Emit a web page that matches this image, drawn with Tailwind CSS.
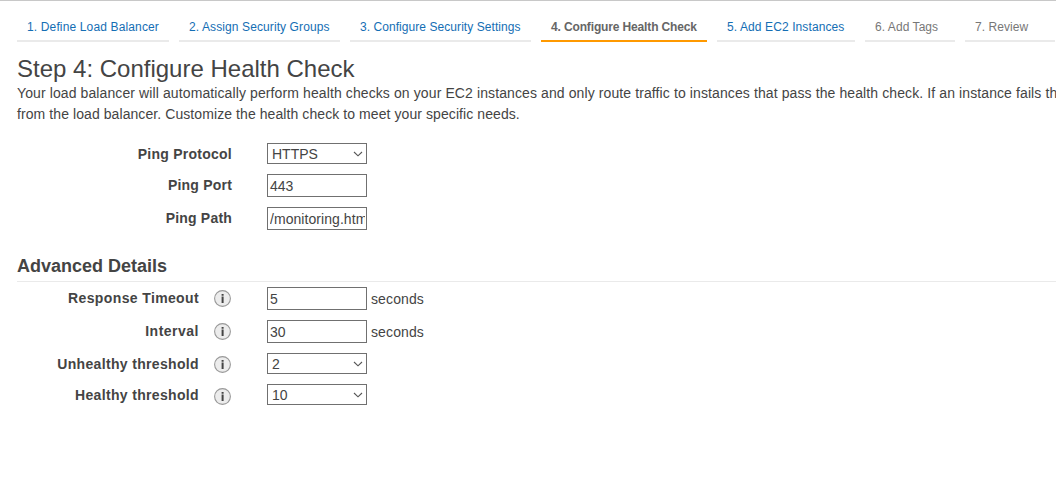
<!DOCTYPE html>
<html lang="en">
<head>
<meta charset="utf-8">
<title>Configure Health Check</title>
<script src="https://cdn.jsdelivr.net/npm/@tailwindcss/browser@4"></script>
</head>
<body class="h-[479px] overflow-hidden border-t border-[#c8c8c8] bg-white pl-[17px] font-['Liberation_Sans',Arial,sans-serif] text-sm text-[#444]">
<svg class="hidden">
  <symbol id="info" viewBox="0 0 17 17">
    <circle cx="8.5" cy="8.5" r="7.9" fill="#ececec" stroke="#999" stroke-width="1.1"/>
    <path d="M7.6 4h2v1.7h-2zM7.6 6.6h2V13h-2z" fill="#444"/>
  </symbol>
  <symbol id="chev" viewBox="0 0 10 6">
    <path d="M1 1L5 4.8 9 1" fill="none" stroke="#555" stroke-width="1.1"/>
  </symbol>
</svg>

<nav class="flex w-[1039px] gap-[10px] pt-[16px] text-[12px] leading-[20px] whitespace-nowrap text-[#146eb4] *:h-[25px] *:shrink-0 *:border-b-2 *:pl-[10px]">
  <a class="w-[152px] border-[#eaeaea] tracking-[0.14px]">1. Define Load Balancer</a>
  <a class="w-[161px] border-[#eaeaea] tracking-[0.1px]">2. Assign Security Groups</a>
  <a class="w-[181px] border-[#eaeaea] tracking-[0.06px]">3. Configure Security Settings</a>
  <a class="w-[166px] border-[#ff9900] font-bold tracking-[-0.14px] text-[#666]">4. Configure Health Check</a>
  <a class="w-[138px] border-[#eaeaea] tracking-[0.1px]">5. Add EC2 Instances</a>
  <a class="w-[90px] border-[#eaeaea] tracking-[0.06px] text-[#777]">6. Add Tags</a>
  <a class="w-[90px] border-[#eaeaea] tracking-[0.06px] text-[#777]">7. Review</a>
</nav>

<h1 class="mt-[12px] h-[29px] text-[24px] leading-[29px] whitespace-nowrap">Step 4: Configure Health Check</h1>
<p class="leading-[21px] whitespace-nowrap"><span class="tracking-[0.105px]">Your load balancer will automatically perform health checks on your EC2 instances and only route traffic to instances that pass the health check. If an instance fails th</span><br><span class="tracking-[0.08px]">from the load balancer. Customize the health check to meet your specific needs.</span></p>

<section class="mt-[18px] flex flex-col gap-[10px]">
  <div class="flex h-[21px] items-start">
    <label class="mt-px w-[215px] text-right font-bold tracking-[0.25px]">Ping Protocol</label>
    <div class="ml-[35px] flex h-[21px] w-[100px] items-center justify-between border border-[#707070] pr-[3px] pl-1"><span>HTTPS</span><svg class="h-[6px] w-[10px]"><use href="#chev"/></svg></div>
  </div>
  <div class="flex h-[23px] items-start">
    <label class="mt-px w-[215px] text-right font-bold tracking-[0.2px]">Ping Port</label>
    <div class="ml-[35px] flex h-[23px] w-[100px] items-center border border-[#707070] px-[2px]">443</div>
  </div>
  <div class="flex h-[23px] items-start">
    <label class="mt-px w-[215px] text-right font-bold tracking-[0.2px]">Ping Path</label>
    <div class="ml-[35px] flex h-[23px] w-[100px] items-center border border-[#707070] pr-px pl-[2px]"><span class="overflow-hidden tracking-[0.06px] whitespace-nowrap">/monitoring.htm</span></div>
  </div>
</section>

<h2 class="mt-[24px] h-[28px] border-b border-[#eaeaea] text-[18px] leading-[24px] font-bold">Advanced Details</h2>

<section class="mt-[5px] flex flex-col gap-[10px]">
  <div class="flex h-[23px] items-start">
    <label class="mt-px w-[182px] text-right font-bold tracking-[0.37px]">Response Timeout</label>
    <svg class="mt-[3px] ml-[15px] size-[17px]"><use href="#info"/></svg>
    <div class="ml-[36px] flex h-[23px] w-[100px] items-center border border-[#707070] px-[2px]">5</div>
    <span class="mt-[2px] ml-1 tracking-[0.12px]">seconds</span>
  </div>
  <div class="flex h-[23px] items-start">
    <label class="mt-px w-[182px] text-right font-bold tracking-[0.5px]">Interval</label>
    <svg class="mt-[3px] ml-[15px] size-[17px]"><use href="#info"/></svg>
    <div class="ml-[36px] flex h-[23px] w-[100px] items-center border border-[#707070] px-[2px]">30</div>
    <span class="mt-[2px] ml-1 tracking-[0.12px]">seconds</span>
  </div>
  <div class="flex h-[21px] items-start">
    <label class="mt-px w-[182px] text-right font-bold tracking-[0.34px]">Unhealthy threshold</label>
    <svg class="mt-[3px] ml-[15px] size-[17px]"><use href="#info"/></svg>
    <div class="ml-[36px] flex h-[21px] w-[100px] items-center justify-between border border-[#707070] pr-[3px] pl-1"><span>2</span><svg class="h-[6px] w-[10px]"><use href="#chev"/></svg></div>
  </div>
  <div class="flex h-[21px] items-start">
    <label class="mt-px w-[182px] text-right font-bold tracking-[0.34px]">Healthy threshold</label>
    <svg class="mt-[4px] ml-[15px] size-[17px]"><use href="#info"/></svg>
    <div class="ml-[36px] flex h-[21px] w-[100px] items-center justify-between border border-[#707070] pr-[3px] pl-1"><span>10</span><svg class="h-[6px] w-[10px]"><use href="#chev"/></svg></div>
  </div>
</section>
</body>
</html>
